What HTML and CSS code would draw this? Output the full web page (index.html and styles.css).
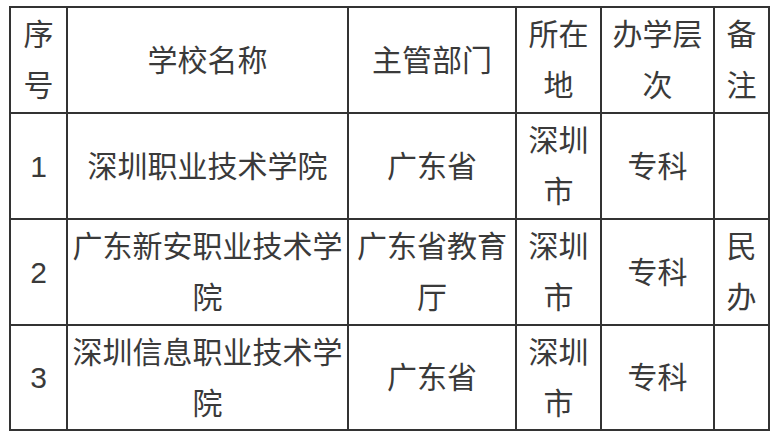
FILE: index.html
```html
<!DOCTYPE html>
<html lang="zh-CN">
<head>
<meta charset="utf-8">
<link rel="stylesheet" href="styles.css">
</head>
<body>
<div class="page">
<table class="schools">
<colgroup>
<col class="c1"><col class="c2"><col class="c3"><col class="c4"><col class="c5"><col class="c6">
</colgroup>
<tr class="row"><td>序号</td><td>学校名称</td><td>主管部门</td><td>所在地</td><td>办学层次</td><td>备注</td></tr>
<tr class="row"><td>1</td><td>深圳职业技术学院</td><td>广东省</td><td>深圳市</td><td>专科</td><td></td></tr>
<tr class="row"><td>2</td><td>广东新安职业技术学院</td><td>广东省教育厅</td><td>深圳市</td><td>专科</td><td>民办</td></tr>
<tr class="row last"><td>3</td><td>深圳信息职业技术学院</td><td>广东省</td><td>深圳市</td><td>专科</td><td></td></tr>
</table>
</div>
</body>
</html>
```

FILE: styles.css
```css
html, body {
  margin: 0;
  background: #ffffff;
}
.page {
  padding: 6px 0 0 9px;
}
.schools {
  border-collapse: collapse;
  table-layout: fixed;
  width: 761px;
  border: 2px solid #333;
  font-family: "Liberation Sans", "Noto Sans CJK SC", sans-serif;
  font-size: 30px;
  line-height: 51px;
  color: #3a3a3a;
}
.c1 { width: 57px; }
.c2 { width: 281px; }
.c3 { width: 168px; }
.c4 { width: 85px; }
.c5 { width: 113px; }
.c6 { width: 55px; }
.schools td {
  border: 2px solid #333;
  padding: 0;
  text-align: center;
  vertical-align: middle;
  word-break: break-all;
}
.row { height: 106px; }
.row.last { height: 105px; }
```
